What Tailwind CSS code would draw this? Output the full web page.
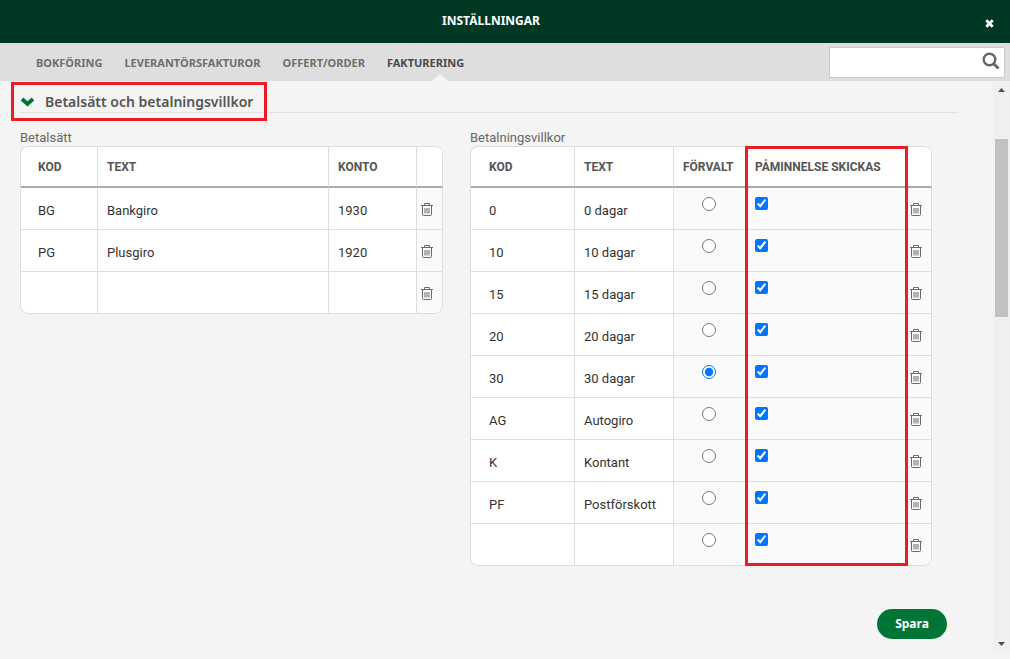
<!DOCTYPE html>
<html lang="sv">
<head>
<meta charset="utf-8">
<title>Inställningar</title>
<script src="https://cdn.jsdelivr.net/npm/@tailwindcss/browser@4"></script>
</head>
<body class="flex min-h-screen flex-col bg-[#f4f4f4] font-['Roboto',sans-serif] text-[13px] leading-4 text-[#333]">
<svg class="hidden" aria-hidden="true">
  <symbol id="trash" viewBox="0 0 12 13"><path d="M0 2.500h12M3.500 2V.5h5V2M1.500 3v8.500q0 1 1 1h7q1 0 1-1V3M4 5v5.500M6 5v5.500M8 5v5.500" fill="none" stroke="#6a6a6a" stroke-width="1"/></symbol>
</svg>

<header class="grid h-[43px] grid-cols-[1fr_auto_1fr] items-center bg-[#003824] px-4 text-white">
  <h1 class="col-start-2 pr-7 pb-0.5 font-['Noto_Sans',sans-serif] text-[12px] leading-4 font-bold">INSTÄLLNINGAR</h1>
  <button type="button" aria-label="Stäng" class="mt-1 justify-self-end">
    <svg class="size-[9px]" viewBox="0 0 9 9"><path d="M1.300 1.300l6.400 6.400M7.700 1.300L1.300 7.700" stroke="#fff" stroke-width="2.800"/></svg>
  </button>
</header>

<nav class="flex h-[38px] items-center justify-between bg-[#dedede] pr-[5px] pl-9">
  <div class="flex h-full items-stretch gap-[22px] font-['Noto_Sans',sans-serif] text-[11px] font-bold text-[#706f6b]">
    <a href="#" class="flex items-center pt-px">BOKFÖRING</a>
    <a href="#" class="flex items-center pt-px">LEVERANTÖRSFAKTUROR</a>
    <a href="#" class="flex items-center pt-px">OFFERT/ORDER</a>
    <a href="#" aria-current="page" class="relative flex items-center pt-px text-[#4a4a48]">FAKTURERING
      <svg class="absolute bottom-0 left-[45px] h-[7px] w-4" viewBox="0 0 16 7"><path d="M0 7L8 0l8 7z" fill="#f4f4f4"/></svg>
    </a>
  </div>
  <form class="flex h-[31px] w-44 items-center rounded-xs border border-[#c8c8c8] bg-white pr-1">
    <input type="search" aria-label="Sök" class="h-full min-w-0 flex-1 px-2 outline-none">
    <button type="button" aria-label="Sök"><svg class="mb-0.5 size-[18px]" viewBox="0 0 18 18" fill="none" stroke="#666"><circle cx="7.500" cy="7.500" r="5.800" stroke-width="2.400"/><path d="M12 12l4.500 4.500" stroke-width="2.800"/></svg></button>
  </form>
</nav>

<div class="flex flex-1 pb-[7px]">
  <main class="flex-1 pr-[35px] pl-5">
    <h2 class="relative flex h-8 items-center border-b border-[#e2e2e2] pt-2.5 font-['Noto_Sans',sans-serif] text-[14px] leading-5 font-semibold text-[#555]">
      <button type="button" aria-expanded="true" class="flex items-center gap-2.5">
        <svg class="h-[10px] w-[15px]" viewBox="0 0 15 10"><path d="M2 2l5.500 5L13 2" fill="none" stroke="#007535" stroke-width="3.800"/></svg>
        Betalsätt och betalningsvillkor
      </button>
      <span class="pointer-events-none absolute top-px -left-[9px] h-[39px] w-64 border-3 border-[#ed1c24]"></span>
    </h2>

    <div class="flex items-start gap-[27px] pt-[17px]">
      <section>
        <h3 id="methods" class="h-4 text-[#666]">Betalsätt</h3>
        <table aria-labelledby="methods" class="w-[423px] table-fixed border-separate border-spacing-0 overflow-hidden rounded-[8px] border-t border-l border-[#ddd] bg-white text-left [&_td]:h-[42px] [&_td]:border-r [&_td]:border-b [&_td]:border-[#ddd] [&_td]:pt-[5px] [&_td]:pl-[9px] [&_td:first-child]:pl-[17px] [&_td:last-child]:bg-[#fafafa] [&_td:last-child]:pt-0.5 [&_td:last-child]:pl-1 [&_th]:h-[41px] [&_th]:border-r [&_th]:border-b-2 [&_th]:border-r-[#ddd] [&_th]:border-b-[#aaa] [&_th]:pl-[9px] [&_th]:text-[12px] [&_th]:font-bold [&_th]:text-[#555] [&_th:first-child]:pl-[17px]">
          <colgroup><col class="w-[77px]"><col class="w-[231px]"><col class="w-[88px]"><col class="w-[26px]"></colgroup>
          <thead><tr><th>KOD</th><th>TEXT</th><th>KONTO</th><th></th></tr></thead>
          <tbody>
            <tr><td>BG</td><td>Bankgiro</td><td>1930</td><td><button type="button" aria-label="Ta bort BG" class="block"><svg class="h-[13px] w-3"><use href="#trash"/></svg></button></td></tr>
            <tr><td>PG</td><td>Plusgiro</td><td>1920</td><td><button type="button" aria-label="Ta bort PG" class="block"><svg class="h-[13px] w-3"><use href="#trash"/></svg></button></td></tr>
            <tr><td class="rounded-bl-[8px]"></td><td></td><td></td><td class="rounded-br-[8px]"><button type="button" aria-label="Ta bort tom rad" class="block"><svg class="h-[13px] w-3"><use href="#trash"/></svg></button></td></tr>
          </tbody>
        </table>
      </section>

      <section>
        <h3 id="terms" class="h-4 text-[#666]">Betalningsvillkor</h3>
        <div class="relative">
          <table aria-labelledby="terms" class="w-[462px] table-fixed border-separate border-spacing-0 overflow-hidden rounded-[8px] border-t border-l border-[#ddd] bg-white text-left [&_input]:block [&_input]:size-[13px] [&_input]:accent-[#0075ff] [&_input[type=radio]]:mx-auto [&_input[type=radio]]:size-[14px] [&_td]:h-[42px] [&_td]:border-r [&_td]:border-b [&_td]:border-[#ddd] [&_td]:pt-1 [&_td]:pl-[9px] [&_td:first-child]:pl-[18px] [&_td:last-child]:bg-[#fafafa] [&_td:last-child]:pt-px [&_td:last-child]:pl-1 [&_td:nth-child(3)]:bg-[#fafafa] [&_td:nth-child(3)]:pr-0.5 [&_td:nth-child(3)]:pl-0 [&_td:nth-child(3)]:pt-[9px] [&_td:nth-child(3)]:align-top [&_td:nth-child(4)]:bg-[#fafafa] [&_td:nth-child(4)]:pt-[9px] [&_td:nth-child(4)]:align-top [&_th]:h-[41px] [&_th]:border-r [&_th]:border-b-2 [&_th]:border-r-[#ddd] [&_th]:border-b-[#aaa] [&_th]:pl-[9px] [&_th]:text-[12px] [&_th]:font-bold [&_th]:text-[#555] [&_th:first-child]:pl-[18px]">
            <colgroup><col class="w-[104px]"><col class="w-[99px]"><col class="w-[72px]"><col class="w-[160px]"><col class="w-[26px]"></colgroup>
            <thead><tr><th>KOD</th><th>TEXT</th><th>FÖRVALT</th><th>PÅMINNELSE SKICKAS</th><th></th></tr></thead>
            <tbody>
              <tr><td>0</td><td>0 dagar</td><td><input type="radio" name="default" aria-label="Förvalt: 0 dagar"></td><td><input type="checkbox" checked aria-label="Påminnelse skickas: 0 dagar"></td><td><button type="button" aria-label="Ta bort 0" class="block"><svg class="h-[13px] w-3"><use href="#trash"/></svg></button></td></tr>
              <tr><td>10</td><td>10 dagar</td><td><input type="radio" name="default" aria-label="Förvalt: 10 dagar"></td><td><input type="checkbox" checked aria-label="Påminnelse skickas: 10 dagar"></td><td><button type="button" aria-label="Ta bort 10" class="block"><svg class="h-[13px] w-3"><use href="#trash"/></svg></button></td></tr>
              <tr><td>15</td><td>15 dagar</td><td><input type="radio" name="default" aria-label="Förvalt: 15 dagar"></td><td><input type="checkbox" checked aria-label="Påminnelse skickas: 15 dagar"></td><td><button type="button" aria-label="Ta bort 15" class="block"><svg class="h-[13px] w-3"><use href="#trash"/></svg></button></td></tr>
              <tr><td>20</td><td>20 dagar</td><td><input type="radio" name="default" aria-label="Förvalt: 20 dagar"></td><td><input type="checkbox" checked aria-label="Påminnelse skickas: 20 dagar"></td><td><button type="button" aria-label="Ta bort 20" class="block"><svg class="h-[13px] w-3"><use href="#trash"/></svg></button></td></tr>
              <tr><td>30</td><td>30 dagar</td><td><input type="radio" name="default" checked aria-label="Förvalt: 30 dagar"></td><td><input type="checkbox" checked aria-label="Påminnelse skickas: 30 dagar"></td><td><button type="button" aria-label="Ta bort 30" class="block"><svg class="h-[13px] w-3"><use href="#trash"/></svg></button></td></tr>
              <tr><td>AG</td><td>Autogiro</td><td><input type="radio" name="default" aria-label="Förvalt: Autogiro"></td><td><input type="checkbox" checked aria-label="Påminnelse skickas: Autogiro"></td><td><button type="button" aria-label="Ta bort AG" class="block"><svg class="h-[13px] w-3"><use href="#trash"/></svg></button></td></tr>
              <tr><td>K</td><td>Kontant</td><td><input type="radio" name="default" aria-label="Förvalt: Kontant"></td><td><input type="checkbox" checked aria-label="Påminnelse skickas: Kontant"></td><td><button type="button" aria-label="Ta bort K" class="block"><svg class="h-[13px] w-3"><use href="#trash"/></svg></button></td></tr>
              <tr><td>PF</td><td>Postförskott</td><td><input type="radio" name="default" aria-label="Förvalt: Postförskott"></td><td><input type="checkbox" checked aria-label="Påminnelse skickas: Postförskott"></td><td><button type="button" aria-label="Ta bort PF" class="block"><svg class="h-[13px] w-3"><use href="#trash"/></svg></button></td></tr>
              <tr><td class="rounded-bl-[8px]"></td><td></td><td><input type="radio" name="default" aria-label="Förvalt: ny rad"></td><td><input type="checkbox" checked aria-label="Påminnelse skickas: ny rad"></td><td class="rounded-br-[8px]"><button type="button" aria-label="Ta bort tom rad" class="block"><svg class="h-[13px] w-3"><use href="#trash"/></svg></button></td></tr>
            </tbody>
          </table>
          <span class="pointer-events-none absolute inset-y-0 right-6 w-[163px] border-3 border-[#ed1c24]"></span>
        </div>
      </section>
    </div>

    <div class="flex justify-end pt-[43px] pr-[11px]">
      <button type="button" class="h-[30px] w-[70px] rounded-full bg-[#007535] font-['Noto_Sans',sans-serif] text-[12px] font-bold text-white">Spara</button>
    </div>
  </main>

  <div aria-hidden="true" class="flex w-[17px] flex-col items-center bg-[#f0f0f0] pt-[7px] pb-[6px]">
    <svg class="h-1 w-[7px]" viewBox="0 0 7 4"><path d="M0 4L3.500 0 7 4z" fill="#505050"/></svg>
    <div class="mt-[47px] h-[178px] w-[13px] bg-[#c1c1c1]"></div>
    <svg class="mt-auto h-1 w-[7px]" viewBox="0 0 7 4"><path d="M0 0l3.500 4L7 0z" fill="#505050"/></svg>
  </div>
</div>
</body>
</html>
